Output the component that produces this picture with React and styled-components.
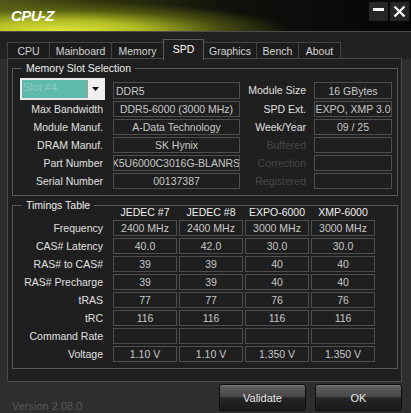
import styled, { createGlobalStyle } from "styled-components";

const GlobalStyle = createGlobalStyle`
  html, body {
    margin: 0;
    padding: 0;
    background: #2c2c2c;
  }

  body {
    font-family: "Liberation Sans", Arial, sans-serif;
    font-size: 10.5px;
  }
`;

const tabs = [
  { name: "CPU", w: 42 },
  { name: "Mainboard", w: 62 },
  { name: "Memory", w: 52 },
  { name: "SPD", w: 40, active: true },
  { name: "Graphics", w: 53 },
  { name: "Bench", w: 42 },
  { name: "About", w: 42 },
];

const slotRows = [
  { label: null, value: "DDR5", align: "flex-start", rLabel: "Module Size", rValue: "16 GBytes" },
  { label: "Max Bandwidth", value: "DDR5-6000 (3000 MHz)", rLabel: "SPD Ext.", rValue: "EXPO, XMP 3.0" },
  { label: "Module Manuf.", value: "A-Data Technology", rLabel: "Week/Year", rValue: "09 / 25" },
  { label: "DRAM Manuf.", value: "SK Hynix", rLabel: "Buffered", rValue: "", dim: true },
  { label: "Part Number", value: "AX5U6000C3016G-BLANRSG", rLabel: "Correction", rValue: "", dim: true },
  { label: "Serial Number", value: "00137387", rLabel: "Registered", rValue: "", dim: true },
];

const timingHeads = ["JEDEC #7", "JEDEC #8", "EXPO-6000", "XMP-6000"];

const timingRows = [
  { label: "Frequency", values: ["2400 MHz", "2400 MHz", "3000 MHz", "3000 MHz"] },
  { label: "CAS# Latency", values: ["40.0", "42.0", "30.0", "30.0"] },
  { label: "RAS# to CAS#", values: ["39", "39", "40", "40"] },
  { label: "RAS# Precharge", values: ["39", "39", "40", "40"] },
  { label: "tRAS", values: ["77", "77", "76", "76"] },
  { label: "tRC", values: ["116", "116", "116", "116"] },
  { label: "Command Rate", values: ["", "", "", ""] },
  { label: "Voltage", values: ["1.10 V", "1.10 V", "1.350 V", "1.350 V"] },
];

export default function App() {
  return (
    <Window>
      <GlobalStyle />

      <TitleBar>
        <Title>CPU-Z</Title>
        <Controls>
          <Ctrl>
            <MinBar />
          </Ctrl>
          <Ctrl>
            <svg width="13" height="13" viewBox="0 0 13 13">
              <path d="M1.5 1.5 L11.5 11.5 M11.5 1.5 L1.5 11.5" stroke="#f2f2f2" strokeWidth="2.4" />
            </svg>
          </Ctrl>
        </Controls>
      </TitleBar>

      <TabStrip>
        {tabs.map((t) => (
          <Tab key={t.name} $w={t.w} $active={t.active}>
            {t.name}
          </Tab>
        ))}
      </TabStrip>

      <Panel>
        <Group>
          <Legend>Memory Slot Selection</Legend>
          <SlotGrid>
            {slotRows.map((r, i) => (
              <Row key={i}>
                {r.label === null ? (
                  <Combo>
                    <ComboText>Slot #4</ComboText>
                    <ComboButton>
                      <svg width="7" height="4" viewBox="0 0 7 4">
                        <path d="M0 0 L7 0 L3.5 4 Z" fill="#111" />
                      </svg>
                    </ComboButton>
                  </Combo>
                ) : (
                  <Label>{r.label}</Label>
                )}
                <Field $align={r.align}>{r.value}</Field>
                <Label $right $dim={r.dim}>
                  {r.rLabel}
                </Label>
                <Field>{r.rValue}</Field>
              </Row>
            ))}
          </SlotGrid>
        </Group>

        <Group $second>
          <Legend>Timings Table</Legend>
          <TimingGrid>
            <span />
            {timingHeads.map((h) => (
              <Head key={h}>{h}</Head>
            ))}
            {timingRows.map((r) => (
              <Row key={r.label}>
                <Label $timing>{r.label}</Label>
                {r.values.map((v, i) => (
                  <Field key={i}>{v}</Field>
                ))}
              </Row>
            ))}
          </TimingGrid>
        </Group>
      </Panel>

      <Footer>
        <Version>Version 2.08.0</Version>
        <Buttons>
          <Button>Validate</Button>
          <Button>OK</Button>
        </Buttons>
      </Footer>
    </Window>
  );
}

const Window = styled.div`
  & {
    width: 411px;
    height: 413px;
    overflow: hidden;
    background: #2e2e2e;
    display: flex;
    flex-direction: column;
  }
`;

const TitleBar = styled.div`
  & {
    height: 32px;
    box-sizing: border-box;
    border-bottom: 1px solid #4c4c4c;
    display: flex;
    justify-content: space-between;
    align-items: flex-start;

    background:
      radial-gradient(ellipse 230px 30px at 60px 31px, rgba(222, 230, 56, 1) 0%, rgba(184, 196, 36, 0.95) 35%, rgba(100, 110, 18, 0.65) 70%, rgba(0, 0, 0, 0) 100%),
      linear-gradient(to right, #52581a 0%, #30340c 25%, #10100c 55%, #060606 100%);
  }
`;

const Title = styled.div`
  & {
    padding: 8px 0 0 11px;
    font-size: 15px;
    line-height: 16px;
    font-weight: 700;
    font-style: italic;
    letter-spacing: -0.6px;
    color: #ffffff;
  }
`;

const Controls = styled.div`
  & {
    display: flex;
    gap: 2px;
    padding: 2px 2px 0 0;
  }
`;

const Ctrl = styled.div`
  & {
    width: 19px;
    height: 19px;
    background: #262626;
    display: flex;
    align-items: center;
    justify-content: center;
  }
`;

const MinBar = styled.span`
  & {
    display: block;
    width: 11px;
    height: 3px;
    margin-top: -5px;
    background: #f2f2f2;
  }
`;

const TabStrip = styled.div`
  & {
    display: flex;
    align-items: flex-end;
    height: 27px;
    box-sizing: border-box;
    padding: 6px 0 0 7px;
    background: #212121;
  }
`;

const Tab = styled.div`
  & {
    position: relative;
    z-index: ${(p) => (p.$active ? 2 : 0)};
    width: ${(p) => p.$w + 1}px;
    height: ${(p) => (p.$active ? 21 : 17)}px;
    margin-left: -1px;
    margin-bottom: ${(p) => (p.$active ? -1 : 0)}px;
    box-sizing: border-box;
    border: 1px solid ${(p) => (p.$active ? "#5c5c5c" : "#444444")};
    border-bottom: none;
    background: ${(p) => (p.$active ? "#1f1f1f" : "#1c1c1c")};
    color: ${(p) => (p.$active ? "#ffffff" : "#d4d4d4")};
    display: flex;
    justify-content: center;
    padding-top: ${(p) => (p.$active ? 3 : 2)}px;
    line-height: 13px;
  }

  &:first-child {
    margin-left: 0;
  }
`;

const Panel = styled.div`
  & {
    position: relative;
    z-index: 1;
    height: 324px;
    margin: -1px 9px 0 7px;
    box-sizing: border-box;
    border: 1px solid #4a4a4a;
    background: #1f1f1f;
  }
`;

const Group = styled.fieldset`
  & {
    margin: 2px 3px 0 4px;
    min-inline-size: 0;
    padding: ${(p) => (p.$second ? "0 5px 6px 0" : "7px 5px 6px 0")};
    border: 1px solid #5a5a5a;
  }
`;

const Legend = styled.legend`
  & {
    margin-left: 9px;
    padding: 0 4px;
    line-height: 14px;
    color: #eeeeee;
  }
`;

const SlotGrid = styled.div`
  & {
    display: grid;
    grid-template-columns: 100px 127px 74px 78px;
    grid-template-rows: 17px repeat(5, 16px);
    row-gap: 2px;
  }
`;

const TimingGrid = styled.div`
  & {
    margin-top: -6px;
    display: grid;
    grid-template-columns: 98px repeat(4, 64px);
    grid-template-rows: 12px repeat(8, 16px);
    column-gap: 2px;
    row-gap: 2px;
  }
`;

const Row = styled.div`
  & {
    display: contents;
  }
`;

const Label = styled.div`
  & {
    text-align: right;
    padding-right: ${(p) => (p.$right || p.$timing ? 8 : 10)}px;
    line-height: 16px;
    white-space: nowrap;
    color: ${(p) => (p.$dim ? "#474747" : "#e0e0e0")};
  }
`;

const Head = styled.div`
  & {
    text-align: center;
    line-height: 12px;
    color: #eeeeee;
  }
`;

const Field = styled.div`
  & {
    box-sizing: border-box;
    border: 1px solid #4e4e4e;
    display: flex;
    align-items: center;
    justify-content: ${(p) => p.$align || "center"};
    padding-left: ${(p) => (p.$align ? 2 : 0)}px;
    overflow: hidden;
    white-space: nowrap;
    color: #c8c8c8;
  }
`;

const Combo = styled.div`
  & {
    align-self: end;
    justify-self: start;
    margin: 0 0 -1px 7px;
    width: 85px;
    height: 22px;
    box-sizing: border-box;
    border: 2px solid #ececec;
    background: #5fbaa9;
    display: flex;
  }
`;

const ComboText = styled.div`
  & {
    flex: 1;
    padding-left: 1px;
    line-height: 15px;
    font-size: 11px;
    color: #8ccdc1;
  }
`;

const ComboButton = styled.div`
  & {
    width: 15px;
    border-left: 1px solid #9a9a9a;
    background: #f0f0f0;
    display: flex;
    align-items: center;
    justify-content: center;
  }
`;

const Footer = styled.div`
  & {
    flex: 1;
    display: flex;
    justify-content: space-between;
    align-items: flex-start;
    padding: 2px 9px 0 12px;
  }
`;

const Version = styled.div`
  & {
    align-self: flex-end;
    line-height: 14px;
    font-size: 11px;
    color: #585858;
  }
`;

const Buttons = styled.div`
  & {
    display: flex;
    gap: 9px;
  }
`;

const Button = styled.button`
  & {
    width: 87px;
    height: 27px;
    border: 1px solid #0c0c0c;
    border-radius: 3px;
    box-shadow: inset 0 1px 0 #7a7a7a;
    background: linear-gradient(to bottom, #626262 0%, #474747 46%, #262626 52%, #1a1a1a 100%);
    font-family: "Liberation Sans", Arial, sans-serif;
    font-size: 11px;
    color: #e8e8e8;
    padding: 0;
  }
`;
